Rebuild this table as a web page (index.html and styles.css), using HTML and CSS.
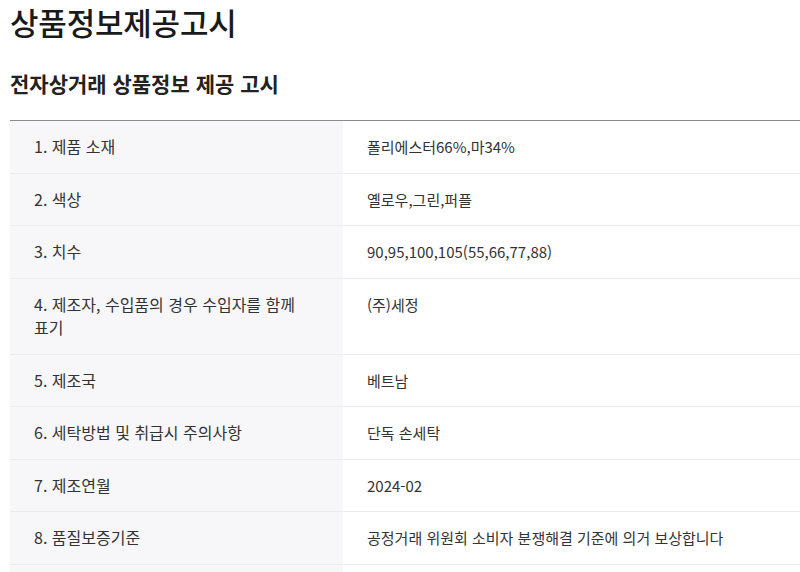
FILE: index.html
```html
<!DOCTYPE html>
<html lang="ko">
<head>
<meta charset="utf-8">
<link rel="stylesheet" href="styles.css">
</head>
<body>
<div class="page">
  <h1 class="title">상품정보제공고시</h1>
  <h2 class="subtitle">전자상거래 상품정보 제공 고시</h2>
  <table class="info">
    <tbody>
      <tr><th>1. 제품 소재</th><td>폴리에스터66%,마34%</td></tr>
      <tr><th>2. 색상</th><td>옐로우,그린,퍼플</td></tr>
      <tr><th>3. 치수</th><td>90,95,100,105(55,66,77,88)</td></tr>
      <tr><th>4. 제조자, 수입품의 경우 수입자를 함께 표기</th><td>(주)세정</td></tr>
      <tr><th>5. 제조국</th><td>베트남</td></tr>
      <tr><th>6. 세탁방법 및 취급시 주의사항</th><td>단독 손세탁</td></tr>
      <tr><th>7. 제조연월</th><td>2024-02</td></tr>
      <tr><th>8. 품질보증기준</th><td>공정거래 위원회 소비자 분쟁해결 기준에 의거 보상합니다</td></tr>
      <tr class="last"><th>&nbsp;</th><td>&nbsp;</td></tr>
    </tbody>
  </table>
</div>
</body>
</html>
```
FILE: styles.css
```css
html, body {
  margin: 0;
  padding: 0;
  background: #fff;
  overflow: hidden;
}
body {
  font-family: "Noto Sans CJK KR", "Noto Sans", sans-serif;
  color: #222;
}
.page {
  padding-left: 10px;
  width: 820px;
}
.title {
  margin: 0;
  font-size: 31px;
  line-height: 44px;
  font-weight: 500;
  color: #1a1a1a;
  letter-spacing: -0.2px;
}
.subtitle {
  margin: 18px 0 0;
  font-size: 21px;
  line-height: 42px;
  font-weight: 700;
  color: #222;
}
.info {
  margin-top: 16px;
  width: 810px;
  border-collapse: collapse;
  border-top: 1px solid #8a8a8a;
  font-size: 15px;
  line-height: 23.5px;
  color: #333;
  word-break: keep-all;
}
.info th, .info td {
  padding: 14px 24px;
  text-align: left;
  vertical-align: top;
  font-weight: 400;
  border-bottom: 1px solid #ececec;
}
.info th {
  width: 285px;
  font-size: 16px;
  background: #f7f7f9;
}
.info td {
  background: #fff;
}
```
